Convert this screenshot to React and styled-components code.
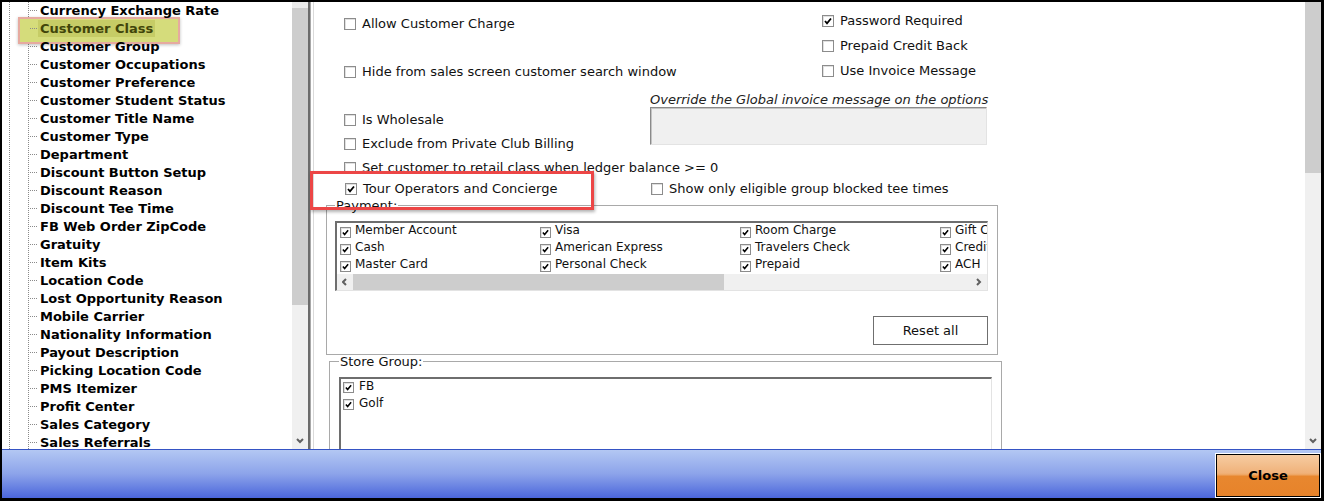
import React from "react";
import styled, { createGlobalStyle } from "styled-components";

const GlobalStyle = createGlobalStyle`
  html, body {
    margin: 0;
    padding: 0;
    background: #fff;
  }
  * {
    box-sizing: border-box;
  }
`;

const Frame = styled.div`
  width: 1324px;
  height: 501px;
  border-style: solid;
  border-color: #000;
  border-width: 2px 3px 3px 2px;
  display: flex;
  flex-direction: column;
  font-family: "DejaVu Sans", Verdana, sans-serif;
  color: #000;
  overflow: hidden;
`;

const Main = styled.div`
  position: relative;
  height: 447px;
  display: flex;
  overflow: hidden;
  background: #fff;
`;

/* ---------- left tree ---------- */

const LeftPane = styled.div`
  width: 306px;
  display: flex;
  flex-shrink: 0;
`;

const Tree = styled.div`
  position: relative;
  width: 290px;
  overflow: hidden;
  padding-top: 0;
  background-color: #fff;
  background-image: linear-gradient(to bottom, #8a8a8a 50%, transparent 50%),
    linear-gradient(to bottom, #8a8a8a 50%, transparent 50%);
  background-size: 1px 2px, 1px 2px;
  background-position: 7px 0, 26px 0;
  background-repeat: repeat-y;
`;

const TreeList = styled.div`
  margin-top: -1px;
`;

const TreeRow = styled.div`
  position: relative;
  z-index: 1;
  height: 18px;
  display: flex;
  align-items: center;
  padding-left: 28px;
  font-size: 13px;
  font-weight: bold;
  line-height: 18px;
  white-space: nowrap;
`;

const Connector = styled.span`
  width: 8px;
  height: 1px;
  background-image: linear-gradient(to right, #8a8a8a 50%, transparent 50%);
  background-size: 2px 1px;
  background-repeat: repeat-x;
`;

const TreeLabel = styled.span`
  padding: 0 2px;
  line-height: 17px;
  color: ${(p) => (p.$selected ? "#41450a" : "#000")};
  background: ${(p) => (p.$selected ? "#c6cc66" : "transparent")};
`;

const HighlightBox = styled.div`
  position: absolute;
  z-index: 0;
  left: 16px;
  top: 15px;
  width: 162px;
  height: 27px;
  background: #d5dc7b;
  border: 2px solid #e6aaa0;
  box-shadow: 0 1px 3px rgba(0, 0, 0, 0.25);
`;

/* ---------- scrollbars ---------- */

const VScroll = styled.div`
  width: 16px;
  flex-shrink: 0;
  display: flex;
  flex-direction: column;
  background: #f0f0f0;
`;

const ScrollGap = styled.div`
  height: ${(p) => p.$h}px;
  background: #ebebeb;
`;

const Thumb = styled.div`
  background: #cdcdcd;
  ${(p) => (p.$h ? `height: ${p.$h}px;` : "")}
  ${(p) => (p.$w ? `width: ${p.$w}px;` : "")}
`;

const Track = styled.div`
  flex: 1;
`;

const ArrowCell = styled.div`
  width: 16px;
  height: 16px;
  display: flex;
  align-items: center;
  justify-content: center;
  flex-shrink: 0;
`;

const Chevron = ({ dir }) => {
  const pts = {
    down: "1,1 4,4 7,1",
    left: "4,1 1,4 4,7",
    right: "1,1 4,4 1,7",
  }[dir];
  const size = dir === "down" ? { w: 8, h: 6 } : { w: 6, h: 8 };
  return (
    <svg width={size.w} height={size.h} viewBox={`0 0 ${size.w} ${size.h}`}>
      <polyline points={pts} fill="none" stroke="#606060" strokeWidth="2" />
    </svg>
  );
};

const Splitter = styled.div`
  width: 5px;
  flex-shrink: 0;
  background: linear-gradient(to right, #6b6b6b 0 2px, #a8a8a8 2px 3px, #fff 3px);
`;

/* ---------- right form ---------- */

const RightPane = styled.div`
  flex: 1;
  display: flex;
  border-left: 1px solid #dadada;
  min-width: 0;
`;

const Content = styled.div`
  flex: 1;
  overflow: hidden;
  padding-left: 12px;
  display: flex;
  flex-direction: column;
  align-items: flex-start;
  font-size: 13px;
`;

const TwoCol = styled.div`
  display: grid;
  grid-template-columns: ${(p) => p.$left}px auto;
  align-items: start;
  padding-left: 18px;
  margin-top: ${(p) => p.$mt || 0}px;
`;

const Col = styled.div`
  display: flex;
  flex-direction: column;
  align-items: flex-start;
  padding-top: ${(p) => p.$pt || 0}px;
`;

const CheckRow = styled.div`
  display: flex;
  align-items: center;
  gap: 6px;
  height: 18px;
  line-height: 18px;
  white-space: nowrap;
  margin-top: ${(p) => p.$mt || 0}px;
  margin-left: ${(p) => p.$ml || 0}px;
  color: #111;
`;

const Box = styled.span`
  width: ${(p) => p.$size}px;
  height: ${(p) => p.$size}px;
  flex-shrink: 0;
  border: 1px solid #8c8c8c;
  background: #fff;
  box-shadow: inset 1px 1px 0 #e0e0e0;
  display: flex;
  align-items: center;
  justify-content: center;
  margin-top: ${(p) => p.$mt || 0}px;
`;

const Check = ({ checked, size = 12, mt }) => (
  <Box $size={size} $mt={mt}>
    {checked && (
      <svg width={size - 4} height={size - 4} viewBox="0 0 8 8">
        <polyline points="1,4 3,6.3 7,1.5" fill="none" stroke="#000" strokeWidth="1.8" />
      </svg>
    )}
  </Box>
);

const Note = styled.div`
  font-style: italic;
  line-height: 15px;
  color: #222;
  white-space: nowrap;
`;

const MessageBox = styled.div`
  width: 337px;
  height: 38px;
  background: #f0f0f0;
  border: 1px solid;
  border-color: #8a8a8a #e3e3e3 #e3e3e3 #8a8a8a;
  box-shadow: inset 1px 1px 0 #c4c4c4;
`;

const Group = styled.fieldset`
  margin: ${(p) => p.$mt || 0}px 0 0 ${(p) => p.$ml || 0}px;
  width: ${(p) => p.$w}px;
  min-width: 0;
  border: 1px solid #a9a9a9;
  padding: 7px 9px 9px ${(p) => p.$pl}px;
  display: flex;
  flex-direction: column;
  flex-shrink: 0;
`;

const Legend = styled.legend`
  padding: 1px 1px 0;
  font-size: 13px;
  line-height: 16px;
  color: #111;
`;

const ListBox = styled.div`
  border-style: solid;
  border-width: 2px 1px 1px 2px;
  border-color: #6e6e6e #e3e3e3 #e3e3e3 #6e6e6e;
  background: #fff;
  overflow: hidden;
  ${(p) => (p.$h ? `height: ${p.$h}px;` : "")}
`;

const ListGrid = styled.div`
  display: grid;
  grid-template-columns: repeat(4, 200px);
  padding-left: 3px;
  height: 51px;
`;

const ListItem = styled.div`
  display: flex;
  align-items: flex-start;
  gap: ${(p) => p.$gap}px;
  height: 17px;
  font-size: 12px;
  line-height: 14px;
  white-space: nowrap;
  color: #111;
`;

const StoreItems = styled.div`
  display: flex;
  flex-direction: column;
  padding-left: 2px;
`;

const HScroll = styled.div`
  display: flex;
  height: 16px;
  background: #f0f0f0;
`;

const ButtonRow = styled.div`
  display: flex;
  justify-content: flex-end;
  margin-top: 25px;
`;

const ResetButton = styled.button`
  width: 115px;
  height: 29px;
  background: #fff;
  border: 1px solid #6f6f6f;
  font-family: inherit;
  font-size: 13px;
  color: #111;
  padding: 0;
`;

const RedBox = styled.div`
  position: absolute;
  z-index: 5;
  left: 308px;
  top: 169px;
  width: 284px;
  height: 39px;
  border: 3px solid #ec4646;
  box-shadow: 1px 2px 3px rgba(0, 0, 0, 0.3);
  pointer-events: none;
`;

/* ---------- bottom bar ---------- */

const Bar = styled.div`
  height: 49px;
  border-top: 1px solid #3553c4;
  background: linear-gradient(to bottom, #b3c7f3 0%, #8ca3ea 50%, #4b66db 100%);
  display: flex;
  justify-content: flex-end;
  padding: 4px 1px 1px 0;
`;

const CloseButton = styled.button`
  width: 104px;
  height: 43px;
  border: 1px solid #000;
  box-shadow: 0 0 0 1px #fff;
  background: linear-gradient(
    to bottom,
    #f6cca2 0%,
    #f0b27a 44%,
    #eea664 48%,
    #e8872f 52%,
    #e7832a 100%
  );
  font-family: inherit;
  font-size: 13px;
  font-weight: bold;
  color: #000;
  padding: 0;
`;

const treeItems = [
  "Currency Exchange Rate",
  "Customer Class",
  "Customer Group",
  "Customer Occupations",
  "Customer Preference",
  "Customer Student Status",
  "Customer Title Name",
  "Customer Type",
  "Department",
  "Discount Button Setup",
  "Discount Reason",
  "Discount Tee Time",
  "FB Web Order ZipCode",
  "Gratuity",
  "Item Kits",
  "Location Code",
  "Lost Opportunity Reason",
  "Mobile Carrier",
  "Nationality Information",
  "Payout Description",
  "Picking Location Code",
  "PMS Itemizer",
  "Profit Center",
  "Sales Category",
  "Sales Referrals",
];

const paymentItems = [
  "Member Account", "Visa", "Room Charge", "Gift Certificate",
  "Cash", "American Express", "Travelers Check", "Credit Card",
  "Master Card", "Personal Check", "Prepaid", "ACH",
];

const Option = ({ label, checked, mt, ml }) => (
  <CheckRow $mt={mt} $ml={ml}>
    <Check checked={checked} />
    <span>{label}</span>
  </CheckRow>
);

export default function App() {
  return (
    <>
      <GlobalStyle />
      <Frame>
        <Main>
          <LeftPane>
            <Tree>
              <HighlightBox />
              <TreeList>
                {treeItems.map((item) => (
                  <TreeRow key={item}>
                    <Connector />
                    <TreeLabel $selected={item === "Customer Class"}>{item}</TreeLabel>
                  </TreeRow>
                ))}
              </TreeList>
            </Tree>
            <VScroll>
              <ScrollGap $h={6} />
              <Thumb $h={297} />
              <Track />
              <ArrowCell>
                <Chevron dir="down" />
              </ArrowCell>
            </VScroll>
          </LeftPane>
          <Splitter />
          <RightPane>
            <Content>
              <TwoCol $left={478} $mt={10}>
                <Col>
                  <Option label="Allow Customer Charge" mt={3} />
                  <Option label="Hide from sales screen customer search window" mt={30} />
                </Col>
                <Col>
                  <Option label="Password Required" checked />
                  <Option label="Prepaid Credit Back" mt={7} />
                  <Option label="Use Invoice Message" mt={7} />
                </Col>
              </TwoCol>

              <TwoCol $left={306} $mt={11}>
                <Col $pt={19}>
                  <Option label="Is Wholesale" />
                  <Option label="Exclude from Private Club Billing" mt={6} />
                </Col>
                <Col>
                  <Note>Override the Global invoice message on the options</Note>
                  <MessageBox />
                </Col>
              </TwoCol>

              <TwoCol $left={306} $mt={6}>
                <Option label="Set customer to retail class when ledger balance >= 0" />
              </TwoCol>

              <TwoCol $left={306} $mt={3}>
                <Option label="Tour Operators and Concierge" checked ml={1} />
                <Option label="Show only eligible group blocked tee times" ml={1} />
              </TwoCol>

              <Group $w={672} $pl={8} $mt={-1}>
                <Legend>Payment:</Legend>
                <ListBox>
                  <ListGrid>
                    {paymentItems.map((item) => (
                      <ListItem key={item} $gap={4}>
                        <Check checked size={11} mt={4} />
                        <span>{item}</span>
                      </ListItem>
                    ))}
                  </ListGrid>
                  <HScroll>
                    <ArrowCell>
                      <Chevron dir="left" />
                    </ArrowCell>
                    <Thumb $w={371} />
                    <Track />
                    <ArrowCell>
                      <Chevron dir="right" />
                    </ArrowCell>
                  </HScroll>
                </ListBox>
                <ButtonRow>
                  <ResetButton>Reset all</ResetButton>
                </ButtonRow>
              </Group>

              <Group $w={673} $pl={9} $ml={3} $mt={-2}>
                <Legend>Store Group:</Legend>
                <ListBox $h={80}>
                  <StoreItems>
                    {["FB", "Golf"].map((item) => (
                      <ListItem key={item} $gap={5}>
                        <Check checked size={11} mt={3} />
                        <span>{item}</span>
                      </ListItem>
                    ))}
                  </StoreItems>
                </ListBox>
              </Group>
            </Content>
            <VScroll>
              <Thumb $h={171} />
              <Track />
              <ArrowCell>
                <Chevron dir="down" />
              </ArrowCell>
            </VScroll>
          </RightPane>
          <RedBox />
        </Main>
        <Bar>
          <CloseButton>Close</CloseButton>
        </Bar>
      </Frame>
    </>
  );
}
